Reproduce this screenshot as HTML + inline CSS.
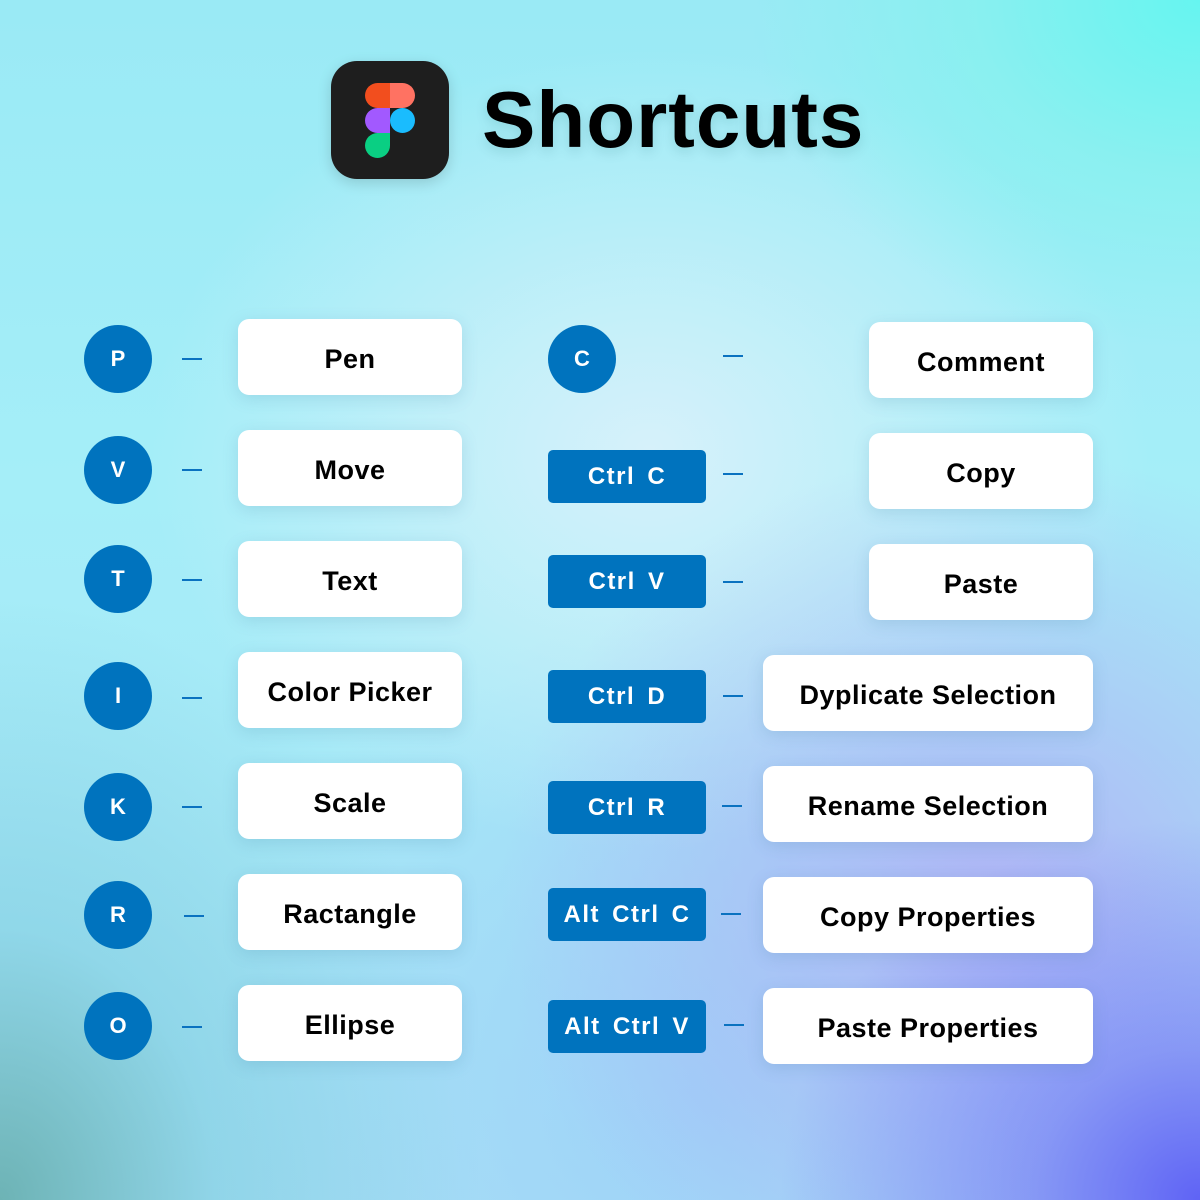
<!DOCTYPE html>
<html><head><meta charset="utf-8"><style>
*{margin:0;padding:0;box-sizing:border-box}
body{width:1200px;height:1200px;overflow:hidden;position:relative;font-family:"Liberation Sans",sans-serif;
background:
radial-gradient(ellipse 420px 380px at 1200px 1200px,#5f63f5 0%,rgba(120,130,245,.7) 40%,rgba(160,170,245,0) 100%),
radial-gradient(ellipse 500px 450px at 1000px 900px,rgba(175,175,245,.9) 0%,rgba(175,180,245,0) 100%),
radial-gradient(ellipse 480px 600px at 0px 1200px,#6db3b5 0%,rgba(120,200,220,.5) 45%,rgba(140,220,240,0) 100%),
radial-gradient(ellipse 450px 350px at 1200px 0px,#66f5f0 0%,rgba(120,245,235,.5) 50%,rgba(150,240,240,0) 100%),
radial-gradient(ellipse 500px 400px at 650px 450px,#d6f1fa 0%,rgba(200,235,250,0) 100%),
radial-gradient(ellipse 500px 500px at 700px 1100px,#9ed2f8 0%,rgba(160,210,250,0) 100%),
linear-gradient(180deg,#9aeaf5 0%,#a5eef8 40%,#a9e2f5 100%);}
.a{position:absolute}
.logo{left:331px;top:61px;width:118px;height:118px;border-radius:26px;background:#1e1e1e;box-shadow:0 4px 14px rgba(0,0,0,.15)}
.title{left:482px;top:70px;font-size:80px;font-weight:bold;color:#000;letter-spacing:1px;line-height:100px;text-shadow:0 4px 12px rgba(0,80,80,.15)}
.c{width:68px;height:68px;border-radius:50%;background:#0073be;color:#fff;font-weight:bold;font-size:22px;display:flex;align-items:center;justify-content:center}
.d{width:20px;height:2px;background:#0a72c0}
.b{background:#fff;border-radius:11px;height:76px;display:flex;align-items:center;justify-content:center;font-size:27px;font-weight:bold;color:#000;letter-spacing:0.5px;padding-top:4px;box-shadow:0 4px 16px rgba(60,120,160,.18)}
.k{left:548px;width:158px;height:53px;background:#0073be;border-radius:5px;color:#fff;font-weight:bold;font-size:24px;letter-spacing:1.5px;word-spacing:4px;display:flex;align-items:center;justify-content:center}
</style></head><body>
<div class="a logo">
<svg width="118" height="118" viewBox="0 0 118 118">
<path d="M46.5 22h12.5v25h-12.5a12.5 12.5 0 0 1 0-25z" fill="#f24e1e"/>
<path d="M59 22h12.5a12.5 12.5 0 0 1 0 25h-12.5z" fill="#ff7262"/>
<path d="M46.5 47h12.5v25h-12.5a12.5 12.5 0 0 1 0-25z" fill="#a259ff"/>
<circle cx="71.5" cy="59.5" r="12.5" fill="#1abcfe"/>
<path d="M46.5 72h12.5v12.5a12.5 12.5 0 1 1-12.5-12.5z" fill="#0acf83"/>
</svg></div>
<div class="a title">Shortcuts</div>

<div class="a c" style="left:84px;top:325px">P</div><div class="a d" style="left:182px;top:358px"></div><div class="a b" style="left:238px;top:319px;width:224px">Pen</div>
<div class="a c" style="left:84px;top:436px">V</div><div class="a d" style="left:182px;top:469px"></div><div class="a b" style="left:238px;top:430px;width:224px">Move</div>
<div class="a c" style="left:84px;top:545px">T</div><div class="a d" style="left:182px;top:579px"></div><div class="a b" style="left:238px;top:541px;width:224px">Text</div>
<div class="a c" style="left:84px;top:662px">I</div><div class="a d" style="left:182px;top:697px"></div><div class="a b" style="left:238px;top:652px;width:224px">Color Picker</div>
<div class="a c" style="left:84px;top:773px">K</div><div class="a d" style="left:182px;top:806px"></div><div class="a b" style="left:238px;top:763px;width:224px">Scale</div>
<div class="a c" style="left:84px;top:881px">R</div><div class="a d" style="left:184px;top:915px"></div><div class="a b" style="left:238px;top:874px;width:224px">Ractangle</div>
<div class="a c" style="left:84px;top:992px">O</div><div class="a d" style="left:182px;top:1026px"></div><div class="a b" style="left:238px;top:985px;width:224px">Ellipse</div>

<div class="a c" style="left:548px;top:325px">C</div><div class="a d" style="left:723px;top:355px"></div><div class="a b" style="left:869px;top:322px;width:224px">Comment</div>
<div class="a k" style="top:450px">Ctrl C</div><div class="a d" style="left:723px;top:473px"></div><div class="a b" style="left:869px;top:433px;width:224px">Copy</div>
<div class="a k" style="top:555px">Ctrl V</div><div class="a d" style="left:723px;top:581px"></div><div class="a b" style="left:869px;top:544px;width:224px">Paste</div>
<div class="a k" style="top:670px">Ctrl D</div><div class="a d" style="left:723px;top:695px"></div><div class="a b" style="left:763px;top:655px;width:330px">Dyplicate Selection</div>
<div class="a k" style="top:781px">Ctrl R</div><div class="a d" style="left:722px;top:805px"></div><div class="a b" style="left:763px;top:766px;width:330px">Rename Selection</div>
<div class="a k" style="top:888px">Alt Ctrl C</div><div class="a d" style="left:721px;top:913px"></div><div class="a b" style="left:763px;top:877px;width:330px">Copy Properties</div>
<div class="a k" style="top:1000px">Alt Ctrl V</div><div class="a d" style="left:724px;top:1024px"></div><div class="a b" style="left:763px;top:988px;width:330px">Paste Properties</div>
</body></html>
